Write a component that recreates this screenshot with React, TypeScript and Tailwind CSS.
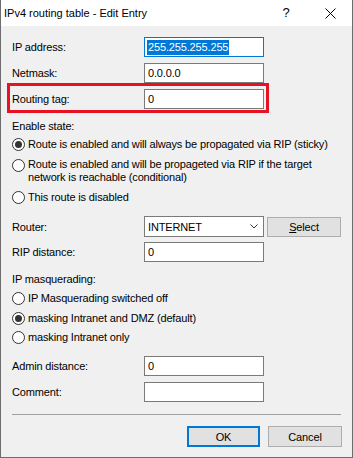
import React from "react";

function Radio({ checked }: { checked?: boolean }) {
  return (
    <span className="w-[13px] h-[13px] rounded-full border border-[#333333] bg-white flex items-center justify-center shrink-0">
      {checked && <span className="w-[7px] h-[7px] rounded-full bg-[#333333]" />}
    </span>
  );
}

function Field({ label, value, focused }: { label: string; value?: string; focused?: boolean }) {
  return (
    <div className="flex items-center h-[20px]">
      <span className="w-[132px] whitespace-nowrap">{label}</span>
      <div
        className={
          focused
            ? "w-[120px] h-[20px] border border-[#0078d7] bg-white flex items-center pl-[2px]"
            : "w-[120px] h-[20px] border border-[#7a7a7a] bg-white flex items-center pl-[2px]"
        }
      >
        {focused ? (
          <span className="bg-[#0078d7] text-white leading-[15px] px-[1px]">{value}</span>
        ) : (
          <span className="px-[1px]">{value}</span>
        )}
      </div>
    </div>
  );
}

export default function App() {
  return (
    <div
      className="w-[353px] h-[458px] bg-[#f0f0f0] border-l border-r border-b border-[#6d6d6d] flex flex-col text-[11px] tracking-[-0.15px] text-black leading-[16px] overflow-hidden"
      style={{ fontFamily: '"Liberation Sans", Arial, sans-serif' }}
    >
      {/* Title bar */}
      <div className="h-[26px] bg-white flex items-center shrink-0">
        <span className="pl-[3px] text-[11px] tracking-[0px] whitespace-nowrap">IPv4 routing table - Edit Entry</span>
        <span className="ml-auto w-[30px] mr-[7px] text-center text-[13px]">?</span>
        <span className="w-[44px] flex justify-center">
          <svg width="11" height="11" viewBox="0 0 11 11">
            <path d="M0.5 0.5 L10.5 10.5 M10.5 0.5 L0.5 10.5" stroke="#000" strokeWidth="1" />
          </svg>
        </span>
      </div>

      <div className="flex flex-col pl-[11px] pr-[10px]">
        <div className="mt-[11px]">
          <Field label="IP address:" value="255.255.255.255" focused />
        </div>
        <div className="mt-[6px]">
          <Field label="Netmask:" value="0.0.0.0" />
        </div>
        <div className="mt-[6px] relative">
          <Field label="Routing tag:" value="0" />
          <div className="absolute left-[-5px] top-[-6px] w-[262px] h-[30px] border-[3px] border-[#e81123] pointer-events-none" />
        </div>

        <div className="mt-[9px] h-[16px]">Enable state:</div>
        <div className="mt-[2px] h-[16px] flex items-center gap-[3px]">
          <Radio checked />
          <span className="whitespace-nowrap">Route is enabled and will always be propagated via RIP (sticky)</span>
        </div>
        <div className="mt-[6px] flex items-start gap-[3px]">
          <span className="mt-[1px]">
            <Radio />
          </span>
          <span className="leading-[13px] whitespace-nowrap flex flex-col">
            <span>Route is enabled and will be propageted via RIP if the target</span>
            <span>network is reachable (conditional)</span>
          </span>
        </div>
        <div className="mt-[5px] h-[16px] flex items-center gap-[3px]">
          <Radio />
          <span>This route is disabled</span>
        </div>

        <div className="mt-[11px] flex items-center h-[21px]">
          <span className="w-[132px]">Router:</span>
          <div className="w-[120px] h-[21px] border border-[#7a7a7a] bg-white flex items-center pl-[3px] pr-[5px]">
            <span>INTERNET</span>
            <svg className="ml-auto" width="8" height="5" viewBox="0 0 8 5">
              <path d="M0.5 0.5 L4 4 L7.5 0.5" stroke="#333" strokeWidth="1" fill="none" />
            </svg>
          </div>
          <div className="ml-[3px] w-[74px] h-[20px] border border-[#adadad] bg-[#e1e1e1] flex items-center justify-center">
            <span>
              <span className="underline">S</span>elect
            </span>
          </div>
        </div>
        <div className="mt-[5px]">
          <Field label="RIP distance:" value="0" />
        </div>

        <div className="mt-[9px] h-[16px]">IP masquerading:</div>
        <div className="mt-[3px] h-[16px] flex items-center gap-[3px]">
          <Radio />
          <span>IP Masquerading switched off</span>
        </div>
        <div className="mt-[4px] h-[16px] flex items-center gap-[3px]">
          <Radio checked />
          <span>masking Intranet and DMZ (default)</span>
        </div>
        <div className="mt-[3px] h-[16px] flex items-center gap-[3px]">
          <Radio />
          <span>masking Intranet only</span>
        </div>

        <div className="mt-[11px]">
          <Field label="Admin distance:" value="0" />
        </div>
        <div className="mt-[6px]">
          <Field label="Comment:" value="" />
        </div>

        <div className="mt-[12px] h-[1px] bg-[#a0a0a0] w-[329px]" />

        <div className="mt-[11px] flex justify-end gap-[8px] w-[330px]">
          <div className="w-[73px] h-[21px] border-2 border-[#0078d7] bg-[#e1e1e1] flex items-center justify-center">
            OK
          </div>
          <div className="w-[74px] h-[21px] border border-[#adadad] bg-[#e1e1e1] flex items-center justify-center">
            Cancel
          </div>
        </div>
      </div>
    </div>
  );
}
